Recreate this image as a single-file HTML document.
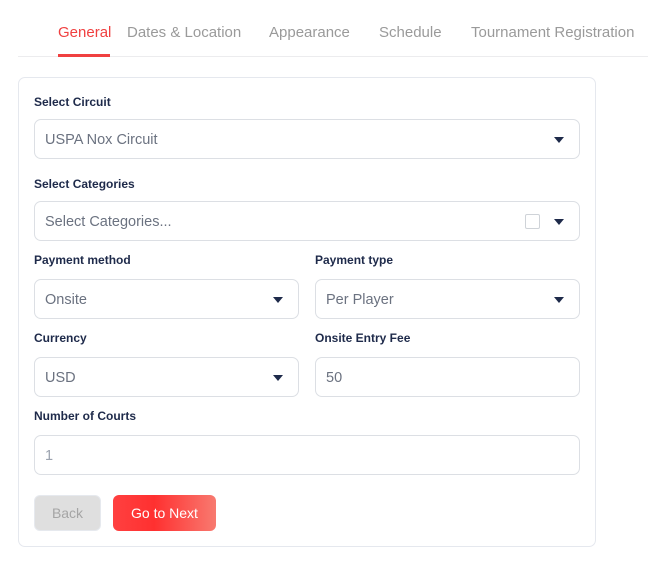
<!DOCTYPE html>
<html><head><style>
*{box-sizing:border-box;margin:0;padding:0}
body{width:648px;height:563px;background:#fff;font-family:"Liberation Sans",sans-serif;position:relative;overflow:hidden}
.a{position:absolute}
.tab{position:absolute;top:24px;font-size:15px;color:#9a9a9a;white-space:nowrap}
.lbl{position:absolute;font-size:12px;font-weight:bold;color:#1e2a4a}
.in{position:absolute;height:40px;border:1px solid #dcdfe4;border-radius:7px;font-size:14.5px;color:#6b7280;padding-left:10px;line-height:40px}
.ar{position:absolute;top:17px;right:15px;width:0;height:0;border-left:5px solid transparent;border-right:5px solid transparent;border-top:6px solid #1e2a4a}
</style></head><body>
<div class="tab" style="left:58px;color:#f04040">General</div>
<div class="tab" style="left:127px">Dates &amp; Location</div>
<div class="tab" style="left:269px">Appearance</div>
<div class="tab" style="left:379px">Schedule</div>
<div class="tab" style="left:471px">Tournament Registration</div>
<div class="a" style="left:18px;top:56px;width:630px;height:1px;background:#ececee"></div>
<div class="a" style="left:58px;top:54px;width:52px;height:3px;background:#f04040"></div>
<div class="a" style="left:18px;top:77px;width:578px;height:470px;border:1px solid #e5e8ee;border-radius:7px"></div>
<div class="lbl" style="left:34px;top:95px">Select Circuit</div>
<div class="in" style="left:34px;top:119px;width:546px">USPA Nox Circuit<div class="ar"></div></div>
<div class="lbl" style="left:34px;top:177px">Select Categories</div>
<div class="in" style="left:34px;top:201px;width:546px">Select Categories...<div class="a" style="left:490px;top:12px;width:15px;height:15px;border:1px solid #cfd3d8;border-radius:2px"></div><div class="ar"></div></div>
<div class="lbl" style="left:34px;top:253px">Payment method</div>
<div class="lbl" style="left:315px;top:253px">Payment type</div>
<div class="in" style="left:34px;top:279px;width:265px">Onsite<div class="ar"></div></div>
<div class="in" style="left:315px;top:279px;width:265px">Per Player<div class="ar"></div></div>
<div class="lbl" style="left:34px;top:331px">Currency</div>
<div class="lbl" style="left:315px;top:331px">Onsite Entry Fee</div>
<div class="in" style="left:34px;top:357px;width:265px">USD<div class="ar"></div></div>
<div class="in" style="left:315px;top:357px;width:265px">50</div>
<div class="lbl" style="left:34px;top:409px">Number of Courts</div>
<div class="in" style="left:34px;top:435px;width:546px;color:#9ca3af">1</div>
<div class="a" style="left:34px;top:495px;width:67px;height:36px;background:#dfdfdf;border:1px solid #e6e9ee;border-radius:6px;color:#a5a5a5;font-size:14px;line-height:34px;text-align:center">Back</div>
<div class="a" style="left:113px;top:495px;width:103px;height:36px;background:linear-gradient(90deg,#ff4040,#ff3030 40%,#f87a70);border-radius:6px;color:#fff;font-size:14px;line-height:36px;text-align:center">Go to Next</div>
</body></html>
